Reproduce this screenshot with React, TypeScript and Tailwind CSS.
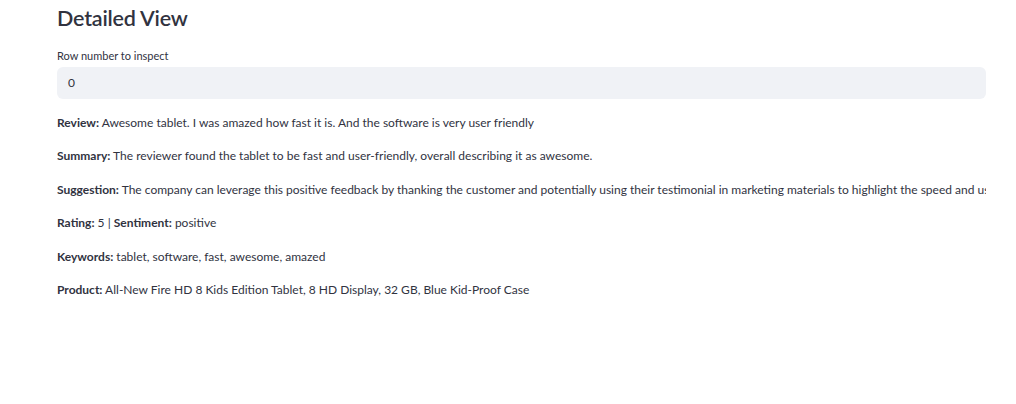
import React from "react";

const rows: [string, string][] = [
  ["Review:", " Awesome tablet. I was amazed how fast it is. And the software is very user friendly"],
  ["Summary:", " The reviewer found the tablet to be fast and user-friendly, overall describing it as awesome."],
  ["Suggestion:", " The company can leverage this positive feedback by thanking the customer and potentially using their testimonial in marketing materials to highlight the speed and user-friendliness of the tablet."],
];

export default function App() {
  return (
    <div
      className="w-[1016px] h-[404px] bg-white text-[#31333f] overflow-hidden"
      style={{ fontFamily: "Lato, 'Open Sans', sans-serif" }}
    >
      <div className="ml-[57px] w-[929px] overflow-hidden pt-[4px]">
        <h2 className="text-[21.5px] font-semibold leading-[28px] tracking-[-0.2px]">Detailed View</h2>
        <div className="mt-[17px] text-[11px] leading-[14px]">Row number to inspect</div>
        <div className="mt-[4px] h-[32px] rounded-[6px] bg-[#f0f2f6] flex items-center pl-[11px] text-[12px]">0</div>
        <div className="mt-[16px] flex flex-col gap-[17.4px] text-[12px] leading-[16px] whitespace-nowrap">
          {rows.map(([k, v]) => (
            <div key={k}>
              <b className="font-bold">{k}</b>
              {v}
            </div>
          ))}
          <div>
            <b className="font-bold">Rating:</b> 5 | <b className="font-bold">Sentiment:</b> positive
          </div>
          <div>
            <b className="font-bold">Keywords:</b> tablet, software, fast, awesome, amazed
          </div>
          <div>
            <b className="font-bold">Product:</b> All-New Fire HD 8 Kids Edition Tablet, 8 HD Display, 32 GB, Blue Kid-Proof Case
          </div>
        </div>
      </div>
    </div>
  );
}
